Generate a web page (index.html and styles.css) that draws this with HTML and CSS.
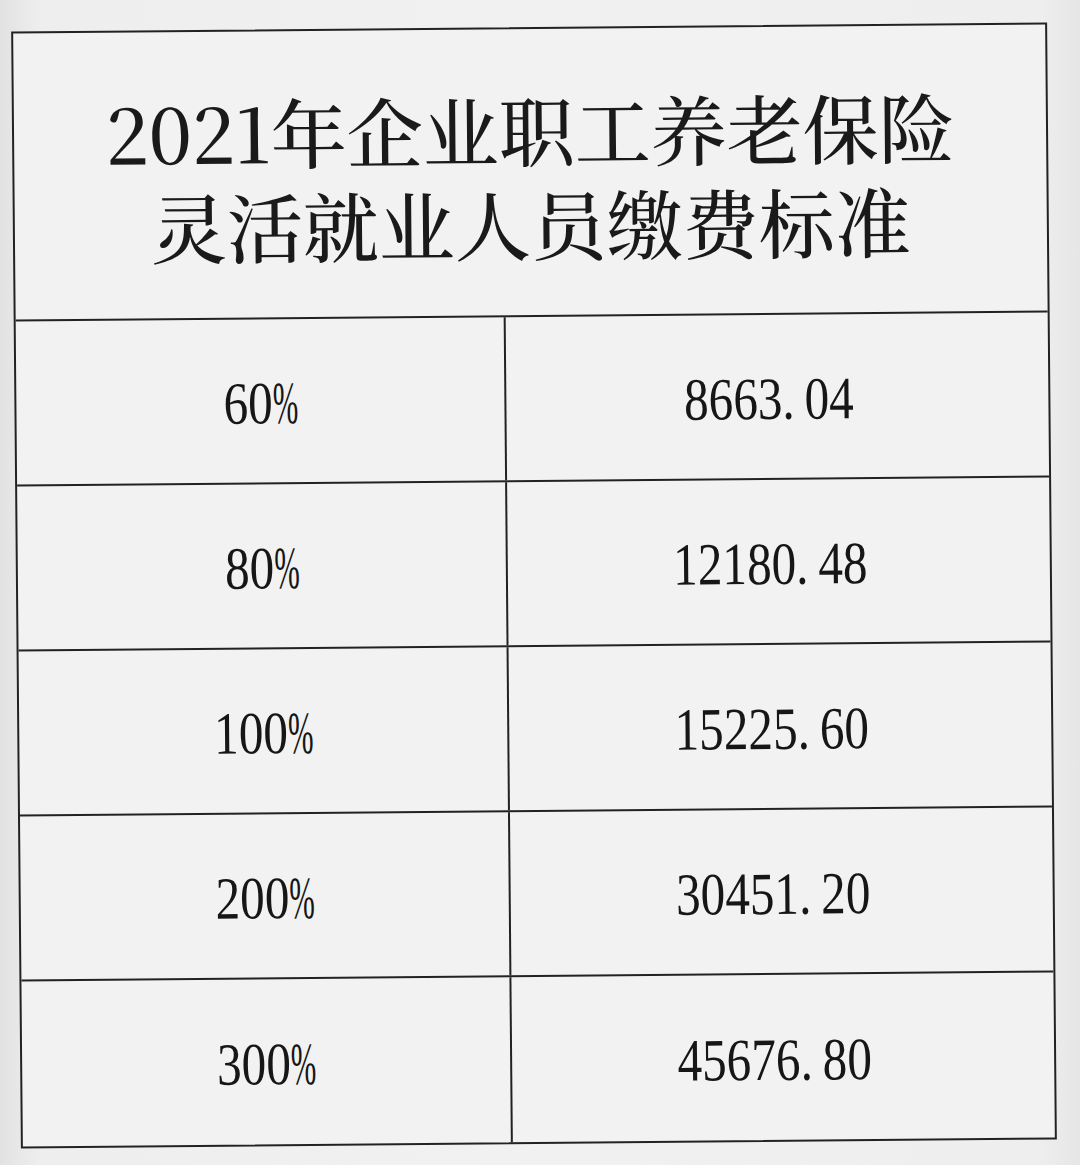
FILE: index.html
```html
<!DOCTYPE html>
<html lang="zh-CN">
<head>
<meta charset="utf-8">
<title>2021年企业职工养老保险灵活就业人员缴费标准</title>
<link rel="stylesheet" href="styles.css">
</head>
<body>
<div class="page">
  <div class="sheet">
    <div class="title">
      <div class="title-line">2021年企业职工养老保险</div>
      <div class="title-line">灵活就业人员缴费标准</div>
    </div>
    <div class="row">
      <div class="cell left"><span class="num">60<span class="pct">%</span></span></div>
      <div class="cell right"><span class="num">8663<span class="dot">.</span>04</span></div>
    </div>
    <div class="row">
      <div class="cell left"><span class="num">80<span class="pct">%</span></span></div>
      <div class="cell right"><span class="num">12180<span class="dot">.</span>48</span></div>
    </div>
    <div class="row">
      <div class="cell left"><span class="num">100<span class="pct">%</span></span></div>
      <div class="cell right"><span class="num">15225<span class="dot">.</span>60</span></div>
    </div>
    <div class="row">
      <div class="cell left"><span class="num">200<span class="pct">%</span></span></div>
      <div class="cell right"><span class="num">30451<span class="dot">.</span>20</span></div>
    </div>
    <div class="row last">
      <div class="cell left"><span class="num">300<span class="pct">%</span></span></div>
      <div class="cell right"><span class="num">45676<span class="dot">.</span>80</span></div>
    </div>
  </div>
</div>
</body>
</html>
```

FILE: styles.css
```css
* { box-sizing: border-box; }

html, body {
  margin: 0;
  padding: 0;
}

body {
  width: 1080px;
  height: 1165px;
  overflow: hidden;
  background: linear-gradient(90deg, #e2e2e2 0px, #eeeeee 40px, #f1f1f1 500px, #eeeeee 1040px, #e6e6e6 1080px);
  color: #1c1c1c;
}

.page {
  padding: 27px 0 0 16px;
}

.sheet {
  width: 1036px;
  height: 1117px;
  border: 2px solid #222;
  display: flex;
  flex-direction: column;
  transform: rotate(-0.5deg);
  transform-origin: 50% 50%;
  background: #f2f2f2;
}

.title {
  height: 288px;
  border-bottom: 2px solid #222;
  display: flex;
  flex-direction: column;
  align-items: center;
  justify-content: center;
  padding-top: 8px;
  font-family: "Noto Serif CJK SC", "AR PL UMing CN", "Liberation Serif", "Noto Sans CJK SC", serif;
  font-size: 76px;
  line-height: 94px;
  font-weight: 500;
  color: #1a1a1a;
}

.title-line {
  white-space: nowrap;
  height: 94px;
}

.row {
  height: 165px;
  display: grid;
  grid-template-columns: 490px 1fr;
  border-bottom: 2px solid #222;
}

.row.last {
  border-bottom: none;
}

.cell {
  display: flex;
  align-items: center;
  justify-content: center;
  padding-top: 4px;
}

.cell.left {
  border-right: 2px solid #222;
}

.cell.right {
  padding-right: 18px;
}

.num {
  display: inline-block;
  font-family: "Liberation Serif", "DejaVu Serif", serif;
  font-size: 60px;
  line-height: 1;
  transform: scaleX(0.82);
  white-space: nowrap;
  color: #161616;
}

.pct {
  display: inline-block;
  transform: scaleX(0.62);
  transform-origin: 0 50%;
  margin-right: -0.32em;
}

.dot {
  padding-right: 0.2em;
}
```
